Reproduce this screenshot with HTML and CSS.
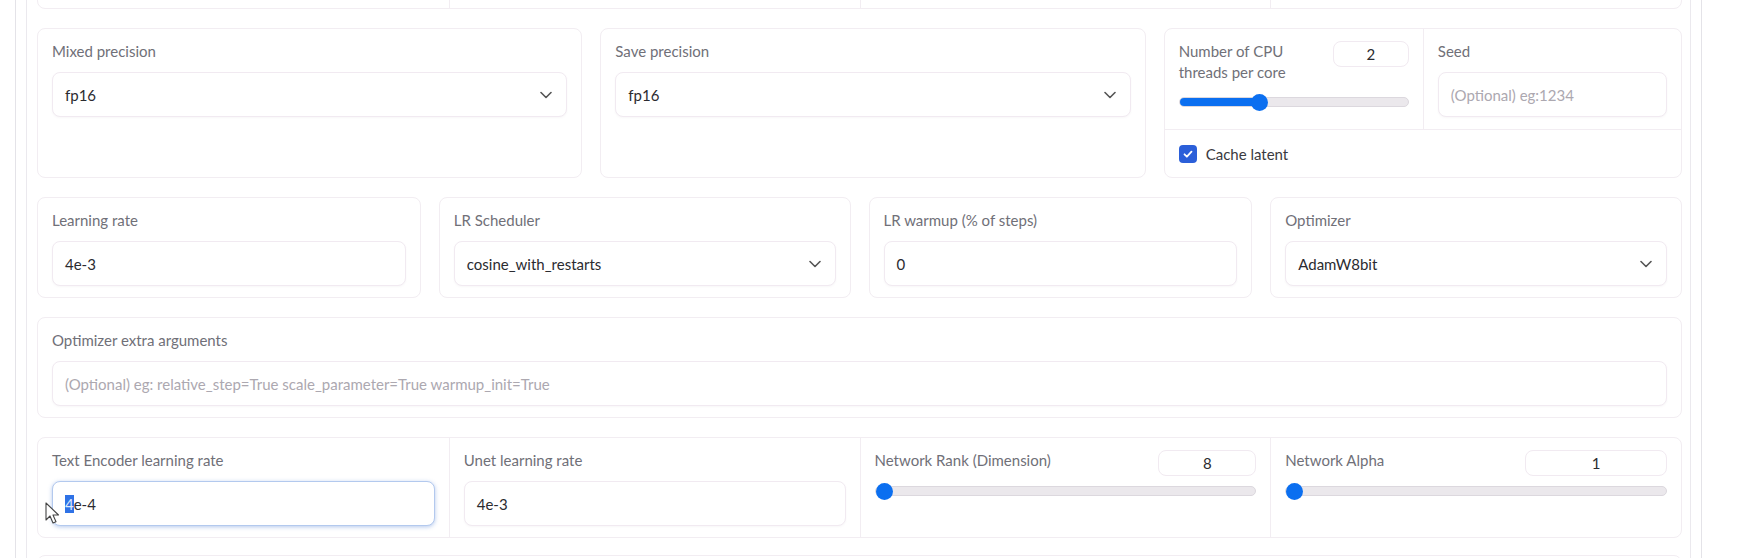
FILE: index.html
```html
<!DOCTYPE html>
<html lang="en">
<head>
    <meta charset="UTF-8">
    <meta name="viewport" content="width=device-width, initial-scale=1.0">
    <title>Training parameters</title>
    <link rel="stylesheet" href="styles.css">
</head>
<body>

    <div class="shell">
        <div class="panel">
            <div class="stack">

                <!-- previous row, scrolled mostly out of view -->
                <div class="card group group-top">
                    <div class="cell"></div>
                    <div class="cell"></div>
                    <div class="cell"></div>
                    <div class="cell"></div>
                </div>

                <div class="row row-1">
                    <div class="card">
                        <label class="label">Mixed precision</label>
                        <div class="field select">
                            <span>fp16</span>
                            <svg class="chevron" viewBox="0 0 12 8" width="12" height="8"><path d="M1 1.5l5 5 5-5" fill="none" stroke="#555" stroke-width="1.6" stroke-linecap="round" stroke-linejoin="round"/></svg>
                        </div>
                    </div>
                    <div class="card">
                        <label class="label">Save precision</label>
                        <div class="field select">
                            <span>fp16</span>
                            <svg class="chevron" viewBox="0 0 12 8" width="12" height="8"><path d="M1 1.5l5 5 5-5" fill="none" stroke="#555" stroke-width="1.6" stroke-linecap="round" stroke-linejoin="round"/></svg>
                        </div>
                    </div>
                    <div class="card box">
                        <div class="box-top">
                            <div class="cell cell-cpu">
                                <div class="head">
                                    <label class="label label-wrap">Number of CPU threads per core</label>
                                    <div class="num num-cpu">2</div>
                                </div>
                                <div class="slider">
                                    <div class="track"><div class="fill" style="width: 35%"></div></div>
                                    <div class="thumb thumb-mid" style="left: 35%"></div>
                                </div>
                            </div>
                            <div class="cell cell-seed">
                                <label class="label">Seed</label>
                                <div class="field placeholder">(Optional) eg:1234</div>
                            </div>
                        </div>
                        <div class="box-bottom">
                            <span class="check">
                                <svg viewBox="0 0 12 12" width="12" height="12"><path d="M2.5 6.3l2.4 2.4 4.6-5" fill="none" stroke="#fff" stroke-width="1.8" stroke-linecap="round" stroke-linejoin="round"/></svg>
                            </span>
                            <span class="check-label">Cache latent</span>
                        </div>
                    </div>
                </div>

                <div class="row row-2">
                    <div class="card">
                        <label class="label">Learning rate</label>
                        <div class="field">4e-3</div>
                    </div>
                    <div class="card">
                        <label class="label">LR Scheduler</label>
                        <div class="field select">
                            <span>cosine_with_restarts</span>
                            <svg class="chevron" viewBox="0 0 12 8" width="12" height="8"><path d="M1 1.5l5 5 5-5" fill="none" stroke="#555" stroke-width="1.6" stroke-linecap="round" stroke-linejoin="round"/></svg>
                        </div>
                    </div>
                    <div class="card">
                        <label class="label">LR warmup (% of steps)</label>
                        <div class="field">0</div>
                    </div>
                    <div class="card">
                        <label class="label">Optimizer</label>
                        <div class="field select">
                            <span>AdamW8bit</span>
                            <svg class="chevron" viewBox="0 0 12 8" width="12" height="8"><path d="M1 1.5l5 5 5-5" fill="none" stroke="#555" stroke-width="1.6" stroke-linecap="round" stroke-linejoin="round"/></svg>
                        </div>
                    </div>
                </div>

                <div class="card">
                    <label class="label">Optimizer extra arguments</label>
                    <div class="field placeholder">(Optional) eg: relative_step=True scale_parameter=True warmup_init=True</div>
                </div>

                <div class="card group">
                    <div class="cell">
                        <label class="label">Text Encoder learning rate</label>
                        <div class="field focused"><span class="sel">4</span>e-4</div>
                        <svg class="cursor" viewBox="0 0 14 22" width="14" height="22"><path d="M1 1v17l4-4 3 7 3-1.3-3-6.7h5.5z" fill="#fff" stroke="#444" stroke-width="1.1" stroke-linejoin="round"/></svg>
                    </div>
                    <div class="cell">
                        <label class="label">Unet learning rate</label>
                        <div class="field">4e-3</div>
                    </div>
                    <div class="cell">
                        <div class="head">
                            <label class="label">Network Rank (Dimension)</label>
                            <div class="num num-rank">8</div>
                        </div>
                        <div class="slider slider-low">
                            <div class="track"></div>
                            <div class="thumb" style="left: 0%"></div>
                        </div>
                    </div>
                    <div class="cell">
                        <div class="head">
                            <label class="label">Network Alpha</label>
                            <div class="num num-alpha">1</div>
                        </div>
                        <div class="slider slider-low">
                            <div class="track"></div>
                            <div class="thumb" style="left: 0%"></div>
                        </div>
                    </div>
                </div>

                <div class="card next"></div>

            </div>
        </div>
    </div>

</body>
</html>
```

FILE: styles.css
```css
/* Reset */
* {
    box-sizing: border-box;
    margin: 0;
    padding: 0;
}

html {
    overflow: hidden;
}

body {
    font-family: Lato, "Open Sans", sans-serif;
    font-size: 15px;
    background-color: #fff;
    color: #2b2b30;
    height: 558px;
    overflow: hidden;
}

.shell {
    margin-left: 15px;
    width: 1687px;
    height: 100%;
    padding: 0 10px;
    border-left: 1px solid #e4e3e8;
    border-right: 1px solid #e4e3e8;
}

.panel {
    display: flow-root;
    height: 100%;
    padding: 0 8px 0 10px;
    border-left: 1px solid #ebe9ee;
    border-right: 1px solid #ebe9ee;
}

.stack {
    display: flex;
    flex-direction: column;
    gap: 19px;
    margin-top: -51px;
}

.card {
    background-color: #fff;
    border: 1px solid #f2edf2;
    border-radius: 8px;
    padding: 12px 14px 11px;
}

.label {
    display: block;
    color: #707078;
    line-height: 21px;
    margin-bottom: 10px;
}

.field {
    height: 45px;
    display: flex;
    align-items: center;
    padding: 0 12px;
    border: 1px solid #f1eaf1;
    border-radius: 8px;
    background-color: #fff;
    box-shadow: 0 1px 2px rgba(120, 90, 120, 0.05);
    color: #2b2b30;
}

.select {
    justify-content: space-between;
    padding-right: 14px;
}

.placeholder {
    color: #aca8b0;
}

.focused {
    border-color: #b3c9ee;
    box-shadow: 0 1px 4px rgba(70, 120, 210, 0.4);
}

.sel {
    background-color: #2f72e6;
    color: #dfe9fb;
}

/* rows */
.row {
    display: grid;
    gap: 18px;
}

.row-1 {
    grid-template-columns: 545fr 545fr 518fr;
}

.row-2 {
    grid-template-columns: 384fr 412fr 384fr 412fr;
}

/* grouped cards split in cells */
.group {
    display: grid;
    grid-template-columns: repeat(4, 1fr);
    padding: 0;
}

.group-top {
    height: 60px;
}

.group .cell {
    position: relative;
    padding: 12px 14px 11px;
    border-left: 1px solid #f2edf2;
}

.group .cell:first-child {
    border-left: none;
}

.box {
    padding: 0;
    display: flex;
    flex-direction: column;
}

.box-top {
    display: grid;
    grid-template-columns: 258fr 258fr;
    border-bottom: 1px solid #f2edf2;
}

.cell-cpu {
    padding: 12px 14px 19px;
}

.cell-seed {
    padding: 12px 14px 11px;
    border-left: 1px solid #f2edf2;
}

.box-bottom {
    height: 47px;
    display: flex;
    align-items: center;
    padding: 0 14px;
}

.head {
    display: flex;
    justify-content: space-between;
    align-items: flex-start;
}

.head .label {
    margin-bottom: 0;
}

.label-wrap {
    width: 140px;
}

.num {
    height: 26px;
    border: 1px solid #f1eaf1;
    border-radius: 8px;
    display: flex;
    align-items: center;
    justify-content: center;
    color: #2b2b30;
}

.num-cpu {
    width: 76px;
}

.num-rank {
    width: 98px;
}

.num-alpha {
    width: 142px;
}

/* sliders */
.slider {
    position: relative;
    height: 16px;
    margin-top: 11px;
}

.slider-low {
    margin-top: 7px;
}

.track {
    position: absolute;
    left: 0;
    right: 0;
    top: 3px;
    height: 10px;
    border-radius: 5px;
    background-color: #ebe8ec;
    border: 1px solid #dcd8de;
    overflow: hidden;
}

.fill {
    height: 100%;
    background-color: #0b6ff0;
}

.thumb {
    position: absolute;
    top: 0;
    width: 17px;
    height: 17px;
    margin-left: 1px;
    border-radius: 50%;
    background-color: #0b6ff0;
}

.thumb-mid {
    margin-left: -8px;
}

/* checkbox */
.check {
    width: 18px;
    height: 18px;
    border-radius: 4px;
    background-color: #2b5fd9;
    display: flex;
    align-items: center;
    justify-content: center;
    margin-right: 9px;
}

.check-label {
    color: #3a3a40;
}

.cursor {
    position: absolute;
    left: 7px;
    top: 64px;
}

.next {
    height: 60px;
    margin-top: -2px;
}
```
